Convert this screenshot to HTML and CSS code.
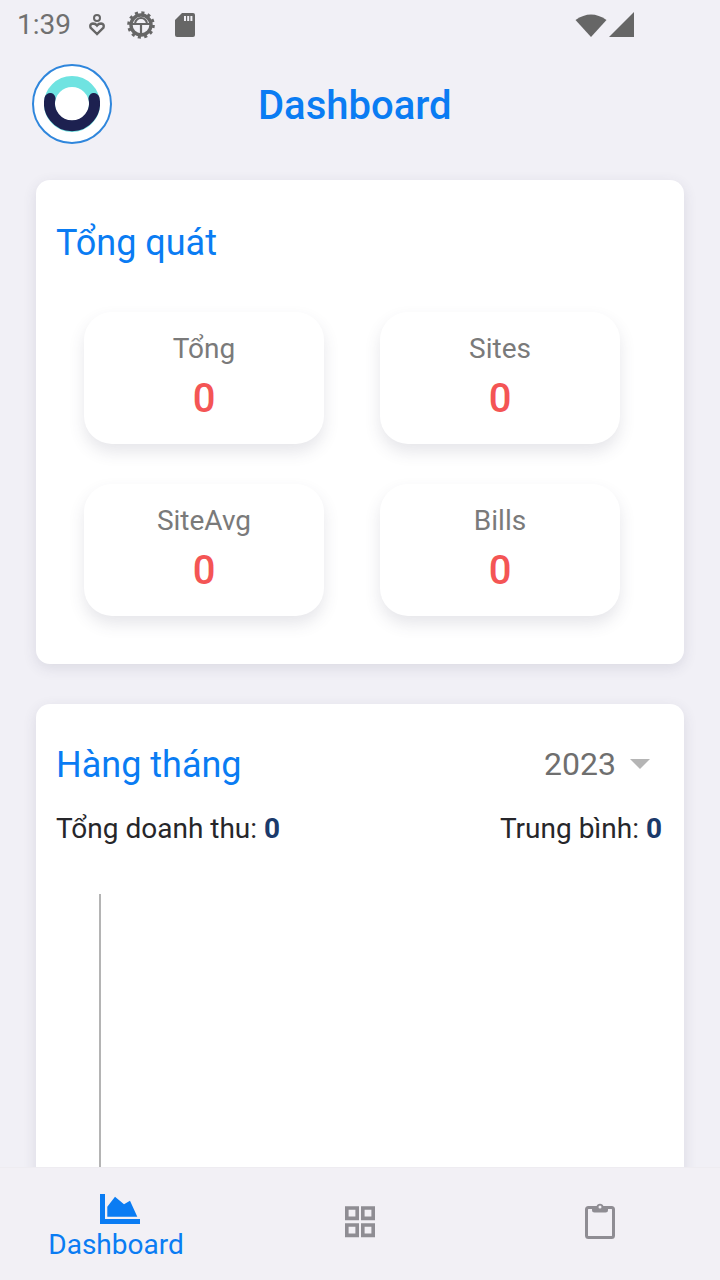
FILE: index.html
```html
<!DOCTYPE html>
<html lang="vi">
<head>
<meta charset="utf-8">
<title>Dashboard</title>
<link rel="stylesheet" href="styles.css">
</head>
<body>
<div class="screen">
  <div class="status">
    <span class="time">1:39</span>
    <svg class="ic-a" viewBox="0 0 16 24"><circle cx="8" cy="5" r="3" fill="none" stroke="#666" stroke-width="2"/><path d="M8 21 L1.5 14.5 Q0.5 11 4 10.5 Q6.5 10.5 8 12.5 Q9.5 10.5 12 10.500 Q15.5 11 14.5 14.5Z" fill="none" stroke="#666" stroke-width="2.4"/></svg>
    <svg class="ic-b" viewBox="0 0 28 28"><circle cx="14" cy="14" r="10" fill="none" stroke="#666" stroke-width="3.4"/><circle cx="14" cy="14" r="12" fill="none" stroke="#666" stroke-width="3.6" stroke-dasharray="3 3.28"/><path d="M5 13H23M14 13V24M8 13a6 6 0 0 1 12 0" fill="none" stroke="#666" stroke-width="2.2"/></svg>
    <svg class="ic-c" viewBox="0 0 20 24"><path d="M7 0H18Q20 0 20 2V22Q20 24 18 24H2Q0 24 0 22V7Z" fill="#666"/><path d="M9 3h2v5H9zM12.2 3h2v5h-2zM15.4 3h2v5h-2z" fill="#f1f0f6"/></svg>
    <span class="status-gap"></span>
    <svg class="ic-wifi" viewBox="0 0 32 26"><path d="M16 25 L0.5 8 Q16 -3 31.500 8Z" fill="#666"/></svg>
    <svg class="ic-sig" viewBox="0 0 25 25"><path d="M25 0V25H0Z" fill="#666"/></svg>
  </div>
  <header class="appbar">
    <div class="logo">
      <svg viewBox="0 0 56 56" width="56" height="56"><circle cx="28" cy="28" r="22.500" fill="none" stroke="#6fe3e1" stroke-width="11"/><path d="M6 22.500 A22.500 22.500 0 1 0 50 22.500" fill="none" stroke="#1d2150" stroke-width="11" stroke-linecap="round"/></svg>
    </div>
    <h1 class="title">Dashboard</h1>
  </header>
  <section class="card overview">
    <h2 class="card-title">Tổng quát</h2>
    <div class="stats">
      <div class="stat"><span class="stat-label">Tổng</span><span class="stat-value">0</span></div>
      <div class="stat"><span class="stat-label">Sites</span><span class="stat-value">0</span></div>
      <div class="stat"><span class="stat-label">SiteAvg</span><span class="stat-value">0</span></div>
      <div class="stat"><span class="stat-label">Bills</span><span class="stat-value">0</span></div>
    </div>
  </section>
  <section class="card monthly">
    <div class="month-head">
      <h2 class="card-title">Hàng tháng</h2>
      <div class="year"><span>2023</span><span class="caret"></span></div>
    </div>
    <div class="totals">
      <span>Tổng doanh thu: <b>0</b></span>
      <span>Trung bình: <b>0</b></span>
    </div>
    <div class="chart"></div>
  </section>
  <nav class="tabbar">
    <div class="tab active">
      <svg class="tab-icon" viewBox="0 0 40 30" width="40" height="30"><path d="M0 0H5V25H40V30H0Z" fill="#0a7cf3"/><path d="M7.300 22.700V12.700L15 2.700L24 10.300L30 6.700L37.300 22.700Z" fill="#0a7cf3"/></svg>
      <span>Dashboard</span>
    </div>
    <div class="tab">
      <svg viewBox="0 0 30 32" width="30" height="32"><path d="M1.800 2h10.400v10.400h-10.400zM17.800 2h10.400v10.400h-10.400zM1.800 19h10.400v10.400h-10.400zM17.800 19h10.400v10.400h-10.400z" fill="none" stroke="#8f8d93" stroke-width="3.600"/></svg>
    </div>
    <div class="tab">
      <svg viewBox="0 0 30 36" width="30" height="36"><rect x="1.500" y="4.500" width="27" height="30" rx="2" fill="none" stroke="#8f8d93" stroke-width="3"/><path d="M7 3.500H11.500A3.600 3.600 0 0 1 18.500 3.500H23V7Q23 9.500 20.500 9.500H9.500Q7 9.500 7 7Z" fill="#8f8d93"/><circle cx="15" cy="4" r="1.500" fill="#f2f0f5"/></svg>
    </div>
  </nav>
</div>
</body>
</html>
```
FILE: styles.css
```css
* { box-sizing: border-box; }
html, body { margin: 0; padding: 0; }
body { font-family: Roboto, "Noto Sans", sans-serif; background: #f1f0f6; }
.screen {
  width: 720px;
  height: 1280px;
  overflow: hidden;
  position: relative;
  display: flex;
  flex-direction: column;
  background: #f1f0f6;
}
.status {
  height: 48px;
  flex: none;
  display: flex;
  align-items: center;
  padding: 1px 86px 0 17px;
  color: #666;
}
.time { font-size: 28px; line-height: 48px; width: 53px; flex: none; white-space: nowrap; color: #707070; }
.ic-a { width: 16px; height: 24px; margin-left: 19px; }
.ic-b { width: 28px; height: 28px; margin-left: 22px; }
.ic-c { width: 20px; height: 24px; margin-left: 20px; }
.status-gap { flex: 1; }
.ic-wifi { width: 32px; height: 26px; }
.ic-sig { width: 25px; height: 25px; margin-left: 2px; }
.appbar {
  height: 112px;
  flex: none;
  display: flex;
  align-items: center;
  padding: 0 32px 0;
}
.logo {
  width: 80px;
  height: 80px;
  border-radius: 50%;
  background: #fff;
  border: 2px solid #2f86dc;
  display: flex;
  align-items: center;
  justify-content: center;
  flex: none;
}
.title {
  margin: 4px 0 0 146px;
  font-size: 40px;
  font-weight: 500;
  color: #0a7cf3;
  line-height: 44px;
}
.card {
  background: #fff;
  border-radius: 14px;
  margin: 20px 36px 0;
  box-shadow: 0 4px 14px rgba(60, 60, 90, 0.12);
  flex: none;
}
.overview { height: 484px; padding: 41px 20px 0; }
.card-title {
  margin: 0;
  font-size: 36px;
  font-weight: 400;
  color: #0a7cf3;
  line-height: 44px;
}
.stats {
  display: grid;
  grid-template-columns: 240px 240px;
  column-gap: 56px;
  row-gap: 40px;
  padding: 47px 0 0 28px;
}
.stat {
  height: 132px;
  background: #fff;
  border-radius: 28px;
  box-shadow: 0 8px 16px rgba(60, 60, 90, 0.13);
  display: flex;
  flex-direction: column;
  align-items: center;
  padding-top: 20px;
}
.stat-label { font-size: 28px; line-height: 34px; color: #7a7a7a; }
.stat-value { font-size: 40px; line-height: 44px; font-weight: 500; color: #f45555; margin-top: 11px; }
.monthly { margin-top: 40px; height: 600px; padding: 39px 22px 0 20px; }
.month-head { display: flex; justify-content: space-between; align-items: center; }
.year { display: flex; align-items: center; font-size: 32px; color: #6f6f6f; padding-right: 12px; margin: -2px 0 0; }
.caret {
  width: 0;
  height: 0;
  margin-left: 14px;
  border-left: 10px solid transparent;
  border-right: 10px solid transparent;
  border-top: 10px solid #b5b5b5;
}
.totals {
  display: flex;
  justify-content: space-between;
  font-size: 28px;
  line-height: 36px;
  color: #26262a;
  margin-top: 24px;
}
.totals b { font-weight: 700; color: #1b3a6b; }
.chart { margin: 47px 0 0 43px; width: 2px; height: 300px; background: #b4b4b4; }
.tabbar {
  position: absolute;
  left: 0;
  right: 0;
  bottom: 0;
  height: 113px;
  background: #f2f0f5;
  border-top: 1px solid #eeecf1;
  display: grid;
  grid-template-columns: repeat(3, 1fr);
  align-items: start;
}
.tab {
  display: flex;
  flex-direction: column;
  align-items: center;
  color: #0a7cf3;
  font-size: 28px;
  line-height: 32px;
}
.tab.active { padding-top: 26px; margin-left: -8px; }
.tab.active span { margin-top: 5px; }
.tab-icon { margin-left: 8px; }
.tab:nth-child(2) { padding-top: 38px; }
.tab:nth-child(3) { padding-top: 35px; }
```
